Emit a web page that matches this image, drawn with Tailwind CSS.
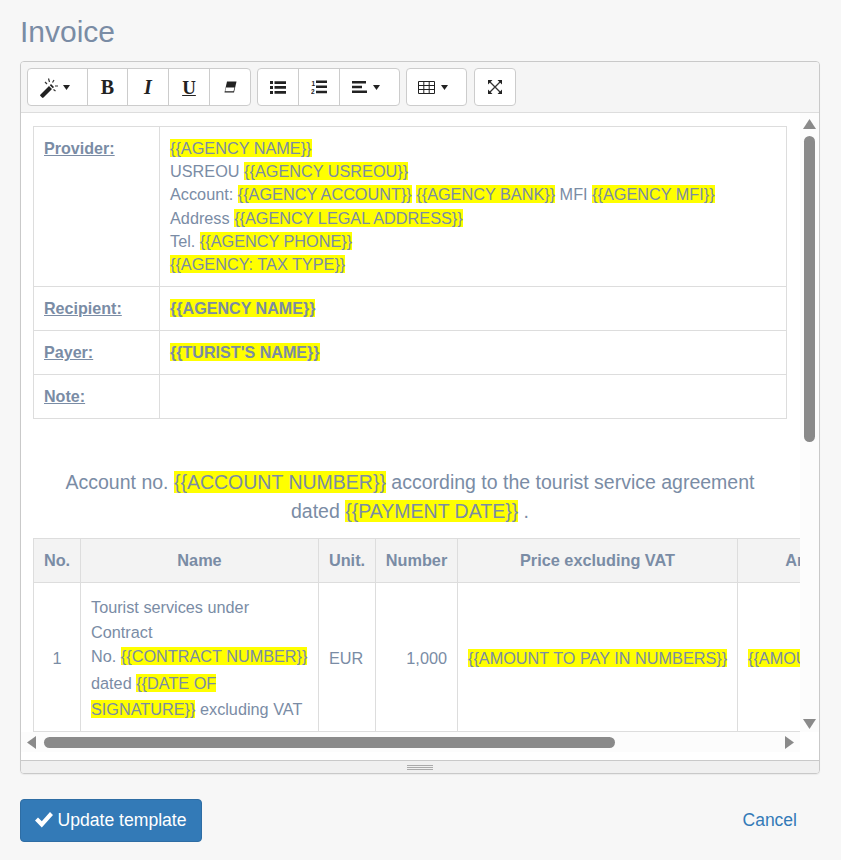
<!DOCTYPE html>
<html>
<head>
<meta charset="utf-8">
<script src="https://cdn.jsdelivr.net/npm/@tailwindcss/browser@4"></script>
</head>
<body class="bg-[#f7f7f7] font-['Liberation_Sans',Arial,sans-serif] text-[#7a8ca5] h-[860px] w-[841px] overflow-hidden">
<div class="px-5 pt-[12px]">
  <h1 class="text-[30px] leading-[40px] font-normal h-[49px] text-[#7a8ca5]">Invoice</h1>
  <div class="w-[800px] h-[713px] border border-[#c9c9c9] rounded-[4px] flex flex-col overflow-hidden shadow-[0_1px_1px_rgba(0,0,0,0.05)]">
    <!-- toolbar -->
    <div class="h-[51px] shrink-0 bg-[#f5f5f5] border-b border-[#dddddd] pl-[6px] pt-[6px] flex text-[#222]">
      <div class="flex h-[38px] bg-white border border-[#cccccc] rounded-[4px] w-[224px] box-border">
        <div class="w-[60px] flex items-center justify-center gap-[5px] border-r border-[#cccccc] pt-[1px] pr-[6px]">
          <svg width="18" height="20" viewBox="0 0 18 20"><path d="M0.500 16.500 9 8l3 3-8.500 8.500a1 1 0 0 1-1.500 0l-1.500-1.500a1 1 0 0 1 0-1.500z" fill="#222"/><path d="M9.800 7.200 11 6l3 3-1.200 1.200z" fill="#222"/><path d="M8.500 .5 9.500 4M14 2 12.500 4.500M18 8h-3M15.500 13 13.500 11.500M5 4 7 6" stroke="#333" stroke-width="1.200" fill="none"/></svg>
          <svg width="7" height="5" viewBox="0 0 7 5"><path d="M0 0h7L3.500 5z" fill="#222"/></svg>
        </div>
        <div class="w-[40px] flex items-center justify-center border-r border-[#cccccc] font-['Liberation_Serif',serif] font-bold text-[20px] leading-none">B</div>
        <div class="w-[41px] flex items-center justify-center border-r border-[#cccccc] font-['Liberation_Serif',serif] font-bold italic text-[20px] leading-none">I</div>
        <div class="w-[41px] flex items-center justify-center border-r border-[#cccccc] font-['Liberation_Serif',serif] font-bold text-[19px] leading-none underline">U</div>
        <div class="flex-1 flex items-center justify-center">
          <svg width="14" height="12" viewBox="0 0 14 12"><path d="M4 .5h9.500L11 11.500H1.500z" fill="#222"/><path d="M2.800 6.500h8.700L10.500 10.300H2.300z" fill="#fff"/></svg>
        </div>
      </div>
      <div class="flex h-[38px] ml-[6px] bg-white border border-[#cccccc] rounded-[4px] w-[143px] box-border">
        <div class="w-[41px] flex items-center justify-center border-r border-[#cccccc]">
          <svg width="16" height="13" viewBox="0 0 16 13" fill="#222"><path d="M0 0h3v3H0zM0 5h3v3H0zM0 10h3v3H0zM4.500 .2H16v2.800H4.500zM4.500 5H16v2.800H4.500zM4.500 10H16v2.800H4.500z"/></svg>
        </div>
        <div class="w-[41px] flex items-center justify-center border-r border-[#cccccc]">
          <svg width="16" height="14" viewBox="0 0 16 14" fill="#222"><path d="M5 .5h11v2.600H5zM5 5.500h11v2.600H5zM5 10.700h11v2.600H5z"/><text x="0.500" y="5.500" font-size="6.500" font-family="Liberation Sans" font-weight="bold">1</text><text x="0" y="13.800" font-size="6.500" font-family="Liberation Sans" font-weight="bold">2</text></svg>
        </div>
        <div class="flex-1 flex items-center justify-center gap-[6px] pr-[8px]">
          <svg width="15" height="12" viewBox="0 0 15 12" fill="#222"><path d="M0 0h14v2.500H0zM0 4.800h10v2.500H0zM0 9.500h15V12H0z"/></svg>
          <svg width="7" height="5" viewBox="0 0 7 5"><path d="M0 0h7L3.500 5z" fill="#222"/></svg>
        </div>
      </div>
      <div class="flex h-[38px] ml-[6px] bg-white border border-[#cccccc] rounded-[4px] w-[61px] items-center justify-center gap-[6px] box-border pr-[8px]">
        <svg width="17" height="13" viewBox="0 0 17 13" fill="none" stroke="#222"><path d="M.5.500h16v12H.5zM.5 4.500h16M.5 8.500h16M5.800.5v12M11.200.5v12"/></svg>
        <svg width="7" height="5" viewBox="0 0 7 5"><path d="M0 0h7L3.500 5z" fill="#222"/></svg>
      </div>
      <div class="flex h-[38px] ml-[7px] bg-white border border-[#cccccc] rounded-[4px] w-[42px] items-center justify-center box-border">
        <svg width="14" height="14" viewBox="0 0 14 14"><path d="M2 2 12 12M12 2 2 12" stroke="#333" stroke-width="1.300"/><path d="M0 0h4.500L0 4.500zM14 0v4.500L9.500 0zM0 14V9.500L4.500 14zM14 14H9.500L14 9.500z" fill="#222"/></svg>
      </div>
    </div>
    <!-- editing area -->
    <div class="h-[647px] shrink-0 bg-white flex flex-col border-b border-[#c9c9c9] box-content">
      <div class="flex h-[619px]">
        <div class="w-[779px] overflow-hidden pl-3 pt-[13px] text-[16.25px] leading-[23.2px]">
          <table class="w-[754px] border-collapse table-fixed">
            <colgroup><col class="w-[126px]"><col></colgroup>
            <tbody>
              <tr>
                <td class="border border-[#dddddd] px-[10px] pt-[10px] pb-[10px] align-top font-bold underline text-[16.1px]">Provider:</td>
                <td class="border border-[#dddddd] px-[10px] pt-[10px] pb-[10px] align-top">
                  <mark class="bg-[#ffff00] text-[#7a8ca5]">{{AGENCY NAME}}</mark><br>
                  USREOU <mark class="bg-[#ffff00] text-[#7a8ca5]">{{AGENCY USREOU}}</mark><br>
                  Account: <mark class="bg-[#ffff00] text-[#7a8ca5]">{{AGENCY ACCOUNT}}</mark> <mark class="bg-[#ffff00] text-[#7a8ca5]">{{AGENCY BANK}}</mark> MFI <mark class="bg-[#ffff00] text-[#7a8ca5]">{{AGENCY MFI}}</mark><br>
                  Address <mark class="bg-[#ffff00] text-[#7a8ca5]">{{AGENCY LEGAL ADDRESS}}</mark><br>
                  Tel. <mark class="bg-[#ffff00] text-[#7a8ca5]">{{AGENCY PHONE}}</mark><br>
                  <mark class="bg-[#ffff00] text-[#7a8ca5]">{{AGENCY: TAX TYPE}}</mark>
                </td>
              </tr>
              <tr class="h-[44px]">
                <td class="border border-[#dddddd] px-[10px] font-bold underline text-[16.1px]">Recipient:</td>
                <td class="border border-[#dddddd] px-[10px] font-bold text-[16.1px]"><mark class="bg-[#ffff00] text-[#7a8ca5]">{{AGENCY NAME}}</mark></td>
              </tr>
              <tr class="h-[44px]">
                <td class="border border-[#dddddd] px-[10px] font-bold underline text-[16.1px]">Payer:</td>
                <td class="border border-[#dddddd] px-[10px] font-bold text-[16.1px]"><mark class="bg-[#ffff00] text-[#7a8ca5]">{{TURIST'S NAME}}</mark></td>
              </tr>
              <tr class="h-[44px]">
                <td class="border border-[#dddddd] px-[10px] font-bold underline text-[16.1px]">Note:</td>
                <td class="border border-[#dddddd] px-[10px]"></td>
              </tr>
            </tbody>
          </table>
          <p class="w-[754px] mt-[49px] text-center text-[19.5px] leading-[29px]">Account no. <mark class="bg-[#ffff00] text-[#7a8ca5]">{{ACCOUNT NUMBER}}</mark> according to the tourist service agreement<br>dated <mark class="bg-[#ffff00] text-[#7a8ca5]">{{PAYMENT DATE}}</mark> .</p>
          <table class="w-[976px] mt-[12px] border-collapse table-fixed">
            <colgroup><col class="w-[47px]"><col class="w-[238px]"><col class="w-[57px]"><col class="w-[82px]"><col class="w-[280px]"><col class="w-[272px]"></colgroup>
            <thead>
              <tr class="h-[44px] bg-[#f3f3f3] text-[16.3px]">
                <th class="border border-[#dddddd] font-bold">No.</th>
                <th class="border border-[#dddddd] font-bold">Name</th>
                <th class="border border-[#dddddd] font-bold">Unit.</th>
                <th class="border border-[#dddddd] font-bold">Number</th>
                <th class="border border-[#dddddd] font-bold">Price excluding VAT</th>
                <th class="border border-[#dddddd] font-bold">Amount excluding VAT</th>
              </tr>
            </thead>
            <tbody>
              <tr class="h-[149px]">
                <td class="border border-[#dddddd] text-center pt-[2px]">1</td>
                <td class="border border-[#dddddd] px-[10px] pt-[2px]">
                  <div class="leading-[25px]">Tourist services under Contract</div>
                  <div class="leading-[23px]">No. <mark class="bg-[#ffff00] text-[#7a8ca5]">{{CONTRACT NUMBER}}</mark></div>
                  <div class="leading-[26px] mt-[2px]">dated <mark class="bg-[#ffff00] text-[#7a8ca5]">{{DATE OF SIGNATURE}}</mark> excluding VAT</div>
                </td>
                <td class="border border-[#dddddd] px-[10px] pt-[2px]">EUR</td>
                <td class="border border-[#dddddd] px-[10px] pt-[2px] text-right">1,000</td>
                <td class="border border-[#dddddd] px-[10px] pt-[2px] whitespace-nowrap"><mark class="bg-[#ffff00] text-[#7a8ca5]">{{AMOUNT TO PAY IN NUMBERS}}</mark></td>
                <td class="border border-[#dddddd] px-[10px] pt-[2px] whitespace-nowrap"><mark class="bg-[#ffff00] text-[#7a8ca5]">{{AMOUNT TO PAY IN NUMBERS}}</mark></td>
              </tr>
            </tbody>
          </table>
        </div>
        <!-- vertical scrollbar -->
        <div class="w-[19px] bg-[#fcfcfc] flex flex-col items-center pt-[6px] pb-[3px]">
          <svg width="13" height="10" viewBox="0 0 13 10"><path d="M6.500 0 13 10H0z" fill="#8a8a8a"/></svg>
          <div class="w-[11px] h-[306px] mt-[7px] rounded-full bg-[#8a8a8a]"></div>
          <div class="flex-1"></div>
          <svg width="13" height="10" viewBox="0 0 13 10"><path d="M6.500 10 13 0H0z" fill="#8a8a8a"/></svg>
        </div>
      </div>
      <!-- horizontal scrollbar -->
      <div class="w-[779px] h-[20px] bg-[#fcfcfc] flex items-center pl-[6px]">
        <svg width="9" height="13" viewBox="0 0 9 13"><path d="M0 6.500 9 0V13z" fill="#8a8a8a"/></svg>
        <div class="w-[571px] h-[11px] ml-[8px] rounded-full bg-[#8a8a8a]"></div>
        <div class="flex-1"></div>
        <svg class="mr-[6px]" width="9" height="13" viewBox="0 0 9 13"><path d="M9 6.500 0 0V13z" fill="#8a8a8a"/></svg>
      </div>
    </div>
    <!-- status bar -->
    <div class="flex-1 bg-[#f0f0f0] flex flex-col items-center justify-center gap-[1px]">
      <div class="w-[26px] h-px bg-[#aaaaaa]"></div>
      <div class="w-[26px] h-px bg-[#aaaaaa]"></div>
      <div class="w-[26px] h-px bg-[#aaaaaa]"></div>
    </div>
  </div>
  <div class="w-[800px] mt-[25px] flex items-center justify-between">
    <button class="h-[43px] w-[182px] bg-[#337ab7] border border-[#2e6da4] rounded-[4px] text-white text-[17.6px] flex items-center justify-center gap-[4px]">
      <svg class="mb-[3px]" width="18" height="17" viewBox="0 0 18 17" fill="#fff"><path d="M0 9.500 3 6.500 6.800 10.300 15 1 18 4 6.800 16.500z"/></svg>
      Update template
    </button>
    <a class="text-[17.5px] text-[#337ab7] mr-[23px]">Cancel</a>
  </div>
</div>
</body>
</html>
